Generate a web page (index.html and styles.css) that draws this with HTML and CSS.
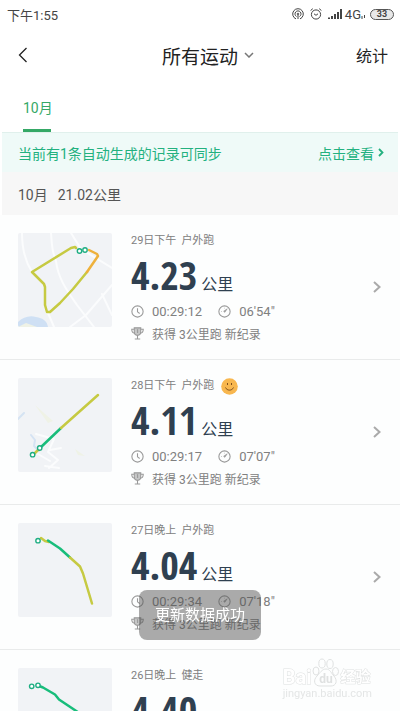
FILE: index.html
```
<!DOCTYPE html>
<html lang="zh-CN">
<head>
    <meta charset="UTF-8">
    <meta name="viewport" content="width=device-width, initial-scale=1.0">
    <title>所有运动</title>
    <link rel="stylesheet" href="styles.css">
</head>
<body>
    <!-- 公用图标 -->
    <svg class="sprite" aria-hidden="true">
        <symbol id="icon-clock" viewBox="0 0 12 12">
            <circle cx="6" cy="6" r="5.2"/>
            <path d="M6 3v3.3l2 1.5"/>
        </symbol>
        <symbol id="icon-pace" viewBox="0 0 12 12">
            <circle cx="6" cy="6" r="5.2"/>
            <path d="M8.5 3.5L6.3 6.8 5.2 5.800z" fill="currentColor" stroke-width=".6"/>
            <path d="M3 6h.6M6 2.600v.5" stroke-width=".7"/>
        </symbol>
        <symbol id="icon-trophy" viewBox="0 0 12 12">
            <path d="M3 .8h6v3.400C9 6.500 7.700 7.700 6 7.700S3 6.500 3 4.200z" fill="currentColor" fill-opacity=".55"/>
            <path d="M3 2H.7c0 2.200.9 3.500 2.700 3.700M9 2h2.300c0 2.200-.9 3.500-2.700 3.700M6 7.700v3M3.500 11h5M5.500 3l.6-.4V5.500"/>
        </symbol>
        <symbol id="icon-right" viewBox="0 0 10 14">
            <path d="M2 2l5.500 5L2 12"/>
        </symbol>
    </svg>

    <div class="app">
        <div class="status-bar">
            <span>下午1:55</span>
            <div class="status-icons">
                <svg width="12" height="12" viewBox="0 0 12 12">
                    <path d="M4 10.900A5.300 5.300 0 1 1 8 10.900M4.500 8.500A3 3 0 1 1 7.500 8.500"/>
                    <circle cx="6" cy="6" r=".8"/>
                    <path d="M6 7v4"/>
                </svg>
                <svg class="alarm" width="12" height="12" viewBox="0 0 12 12">
                    <circle cx="6" cy="6.500" r="4.600"/>
                    <path d="M.6 2.500L2.800.700M11.400 2.500L9.200.700M4 5.800l2 1.500 2-1.500"/>
                </svg>
                <svg class="signal" width="14" height="10" viewBox="0 0 14 10">
                    <path d="M1 10V8.500M4 10V7M7 10V5M10 10V3M13 10V0"/>
                </svg>
                <span class="network">4G</span>
                <svg class="data" width="5" height="4" viewBox="0 0 5 4"><path d="M1 1v3M3.500 0v3"/></svg>
                <span class="battery">33</span>
            </div>
        </div>

        <header class="nav-bar">
            <button type="button" class="back" aria-label="返回">
                <svg width="10" height="16" viewBox="0 0 10 16"><path d="M8.500 1L1.500 8l7 7"/></svg>
            </button>
            <button type="button" class="nav-title">所有运动
                <svg width="10" height="6" viewBox="0 0 10 6"><path d="M1 1l4 4 4-4"/></svg>
            </button>
            <a href="#stats" class="stats-link">统计</a>
        </header>

        <nav class="tabs">
            <a href="#month-10" class="tab active">10月</a>
        </nav>

        <div class="sync-banner">
            <span>当前有1条自动生成的记录可同步</span>
            <a href="#sync">点击查看<svg width="6" height="9" viewBox="0 0 6 9"><path d="M1 1l3.500 3.500L1 8"/></svg></a>
        </div>

        <h2 class="month" id="month-10"><span>10月</span><span>21.02公里</span></h2>

        <main class="records">
            <!-- 29日 -->
            <a href="#run-29" class="record">
                <svg class="map" viewBox="0 0 94 94">
                    <path class="water" d="M0 94v-5c5-5 12-7 18-5 7 1 11 4 12 10z"/>
                    <path class="land" d="M0 94l8-4 11 4z"/>
                    <path class="road" d="M4 0c0 15 3 28 10 39M33 0c1 16 2 20 5 28 2 18 12 31 21 44l17 22M53 0l10 16 31 19M94 52L68 82 52 94M84 61l10 21M30 80l6 14"/>
                    <path class="route" d="M58 15l-1-1-4 1-39 24 12 12 1 3v18l2 7h3l10-9 13-14 14-17"/>
                    <path class="route fast" d="M69 39l11-16-1-2-8-4"/>
                    <circle class="dot" cx="61.500" cy="18" r="2.200"/>
                    <circle class="dot" cx="67" cy="17" r="2.200"/>
                </svg>
                <div class="info">
                    <div class="title"><span>29日下午</span><span>户外跑</span></div>
                    <div class="distance"><strong>4.23</strong><span>公里</span></div>
                    <div class="stats">
                        <svg class="icon"><use href="#icon-clock"/></svg><span class="time">00:29:12</span>
                        <svg class="icon"><use href="#icon-pace"/></svg><span>06'54"</span>
                    </div>
                    <div class="award"><svg class="icon"><use href="#icon-trophy"/></svg><span>获得 3公里跑 新纪录</span></div>
                </div>
                <svg class="arrow"><use href="#icon-right"/></svg>
            </a>

            <!-- 28日 -->
            <a href="#run-28" class="record">
                <svg class="map" viewBox="0 0 94 94">
                    <path class="land" d="M17 27l18 16-5 2zM57 71l10 7-7-1z"/>
                    <path class="stream" d="M0 41l3-3 3-3M13 57l4 5-1 6 5 5"/>
                    <path class="road" d="M18 56l18 5-6 13 10 8-9 8M32 72l11-2M27 88l14 2M20 76l12 7"/>
                    <path class="route" d="M15 77l7-7"/>
                    <path class="route slow" d="M22 70l21-20"/>
                    <path class="route" d="M43 50l37-33"/>
                    <circle class="dot" cx="14.600" cy="76.700" r="2.200"/>
                    <circle class="dot" cx="21.700" cy="70" r="2.200"/>
                </svg>
                <div class="info">
                    <div class="title"><span>28日下午</span><span>户外跑</span>
                        <svg class="face" width="17" height="17" viewBox="0 0 17 17">
                            <circle cx="8.500" cy="8.500" r="8.300" fill="#f8b74f" stroke="none"/>
                            <path d="M6.500 5v2M10.500 5v2M4.500 9.500c1.500 3.500 6.500 3.500 8 0"/>
                        </svg>
                    </div>
                    <div class="distance"><strong>4.11</strong><span>公里</span></div>
                    <div class="stats">
                        <svg class="icon"><use href="#icon-clock"/></svg><span class="time">00:29:17</span>
                        <svg class="icon"><use href="#icon-pace"/></svg><span>07'07"</span>
                    </div>
                    <div class="award"><svg class="icon"><use href="#icon-trophy"/></svg><span>获得 3公里跑 新纪录</span></div>
                </div>
                <svg class="arrow"><use href="#icon-right"/></svg>
            </a>

            <!-- 27日 -->
            <a href="#run-27" class="record">
                <svg class="map" viewBox="0 0 94 94">
                    <path class="route" d="M23 15l4 3 4 1"/>
                    <path class="route slow" d="M30 17.500l12 8 10 9"/>
                    <path class="route" d="M52 34.500l10 9 3 7 9 30"/>
                    <circle class="dot" cx="20" cy="17.700" r="2.200"/>
                </svg>
                <div class="info">
                    <div class="title"><span>27日晚上</span><span>户外跑</span></div>
                    <div class="distance"><strong>4.04</strong><span>公里</span></div>
                    <div class="stats">
                        <svg class="icon"><use href="#icon-clock"/></svg><span class="time">00:29:34</span>
                        <svg class="icon"><use href="#icon-pace"/></svg><span>07'18"</span>
                    </div>
                    <div class="award"><svg class="icon"><use href="#icon-trophy"/></svg><span>获得 3公里跑 新纪录</span></div>
                </div>
                <svg class="arrow"><use href="#icon-right"/></svg>
            </a>

            <!-- 26日 -->
            <a href="#run-26" class="record">
                <svg class="map" viewBox="0 0 94 94">
                    <path class="route slow" d="M20 17.500l5 2 12 7 4 5 18 12 11 9"/>
                    <circle class="dot" cx="13.700" cy="18.300" r="2.200"/>
                    <circle class="dot" cx="20" cy="17.300" r="2.200"/>
                </svg>
                <div class="info">
                    <div class="title"><span>26日晚上</span><span>健走</span></div>
                    <div class="distance"><strong>4.40</strong></div>
                </div>
            </a>
        </main>
    </div>

    <div class="toast" role="status">更新数据成功</div>

    <div class="watermark">
        <div class="brand">
            <span class="bai">Bai</span>
            <span class="paw">
                <svg width="27" height="29" viewBox="0 0 27 29">
                    <ellipse cx="4" cy="13" rx="3" ry="4"/>
                    <ellipse cx="10" cy="5.500" rx="3.200" ry="4.500"/>
                    <ellipse cx="18" cy="6" rx="3.200" ry="4.500"/>
                    <ellipse cx="23.500" cy="13.500" rx="3" ry="4"/>
                    <path d="M14 11c4 0 5 4 8 7 4 5 2 10-3 10H8c-6 0-7-6-3-10 3-3 5-7 9-7z"/>
                </svg>
                <span>du</span>
            </span>
            <span class="cn">经验</span>
        </div>
        <div class="site">jingyan.baidu.com</div>
    </div>
</body>
</html>
```
FILE: styles.css
```
* {
    box-sizing: border-box;
}

body {
    margin: 0;
    font-family: Roboto, 'Noto Sans CJK SC', sans-serif;
    background: #fff;
    color: #333;
}

a {
    color: inherit;
    text-decoration: none;
}

button {
    padding: 0;
    border: none;
    background: none;
    font-family: inherit;
    color: inherit;
}

svg {
    flex-shrink: 0;
    fill: none;
    stroke: currentColor;
}

.sprite {
    position: absolute;
    width: 0;
    height: 0;
}

.app {
    height: 100vh;
    display: flex;
    flex-direction: column;
    overflow: hidden;
}

/* 状态栏 */
.status-bar {
    flex-shrink: 0;
    height: 28px;
    padding: 0 6px 0 7px;
    display: flex;
    align-items: center;
    justify-content: space-between;
    font-size: 13px;
    color: #444;
}

.status-icons {
    display: flex;
    align-items: center;
}

.alarm {
    margin: 0 6px;
}

.signal {
    margin-right: 3px;
    stroke-width: 2;
}

.data {
    align-self: flex-end;
    margin-bottom: 3px;
}

.battery {
    width: 24px;
    height: 11px;
    margin-left: 4px;
    border: 1px solid #555;
    border-radius: 6px;
    background: #e8e8e8;
    font-size: 9px;
    font-weight: bold;
    line-height: 9px;
    text-align: center;
}

/* 导航 */
.nav-bar {
    flex-shrink: 0;
    height: 54px;
    padding: 0 12px;
    display: grid;
    grid-template-columns: 1fr auto 1fr;
    align-items: center;
    color: #222;
}

.back {
    justify-self: start;
    display: flex;
    padding-left: 6px;
    stroke-width: 1.3;
}

.nav-title {
    display: flex;
    align-items: center;
    gap: 6px;
    margin-right: -16px;
    font-size: 19px;
}

.nav-title svg {
    color: #777;
    stroke-width: 1.5;
}

.stats-link {
    justify-self: end;
    font-size: 16px;
}

.tabs {
    flex-shrink: 0;
    height: 51px;
    margin: 0 2px;
    padding: 0 21px;
    display: flex;
    border-bottom: 1px solid #e0f0ec;
}

.tab {
    width: 28px;
    line-height: 52px;
    font-size: 14px;
    white-space: nowrap;
}

.tab.active {
    color: #35a866;
    border-bottom: 3px solid #35a866;
}

/* 同步提示 */
.sync-banner {
    flex-shrink: 0;
    height: 39px;
    margin: 0 2px;
    padding: 0 14px 0 16px;
    display: flex;
    align-items: center;
    justify-content: space-between;
    background: #effaf8;
    color: #23b17f;
    font-size: 14px;
}

.sync-banner a {
    display: flex;
    align-items: center;
    gap: 4px;
}

.sync-banner svg {
    stroke-width: 1.8;
}

.month {
    flex-shrink: 0;
    height: 43px;
    margin: 0 2px;
    padding: 0 16px;
    display: flex;
    align-items: center;
    gap: 10px;
    background: #f7f7f7;
    color: #555;
    font-size: 14px;
    font-weight: normal;
}

/* 运动记录 */
.records {
    flex: 1;
    min-height: 0;
    overflow: hidden;
}

.record {
    height: 145px;
    padding: 18px 18px 0;
    display: flex;
    border-bottom: 1px solid #e9ebeb;
    background: #fdfefe;
}

.map {
    width: 94px;
    height: 94px;
    margin-right: 19px;
    background: #f1f3f6;
    border-radius: 2px;
    stroke-linecap: round;
    stroke-linejoin: round;
}

.road {
    stroke: #fbfcfd;
    stroke-width: 2;
}

.water {
    fill: #cfe0f4;
    stroke: none;
}

.land {
    fill: #eff2e6;
    stroke: none;
}

.stream {
    stroke: #d5e3f3;
    stroke-width: 2;
}

.route {
    stroke: #c6ca42;
    stroke-width: 2.5;
}

.route.fast {
    stroke: #eeb13c;
}

.route.slow {
    stroke: #18bd7b;
}

.dot {
    fill: #fff;
    stroke: #1fae83;
    stroke-width: 1.4;
}

.info {
    flex: 1;
    min-width: 0;
    color: #808080;
}

.title {
    height: 16px;
    display: flex;
    align-items: center;
    gap: 5px;
    font-size: 11px;
    line-height: 16px;
}

.face {
    margin-left: 2px;
    stroke: #80501d;
}

.distance {
    height: 50px;
    display: flex;
    align-items: baseline;
    gap: 4px;
    line-height: 52px;
    color: #2f4050;
}

.distance strong {
    font-family: 'Open Sans Condensed', 'Roboto Condensed', Roboto, sans-serif;
    font-size: 40px;
}

.distance span {
    font-size: 16px;
}

.stats,
.award {
    display: flex;
    align-items: center;
}

.stats {
    height: 24px;
    font-size: 13px;
}

.award {
    height: 20px;
    font-size: 12px;
}

.icon {
    width: 13px;
    height: 13px;
    margin-right: 8px;
    color: #999;
}

.time {
    margin-right: 16px;
}

.arrow {
    width: 10px;
    height: 14px;
    margin-top: 47px;
    color: #aaa;
    stroke-width: 2;
}

/* 提示浮层 */
.toast {
    position: fixed;
    left: 50%;
    bottom: 71px;
    transform: translateX(-50%);
    padding: 0 16px;
    border-radius: 8px;
    background: rgba(80, 80, 80, 0.48);
    color: #fff;
    font-size: 15px;
    line-height: 50px;
    white-space: nowrap;
}

/* 水印 */
.watermark {
    position: fixed;
    right: 28px;
    bottom: 10px;
    color: #fff;
    -webkit-text-stroke: 1px #dfe1e1;
}

.brand {
    display: flex;
    align-items: flex-end;
    gap: 1px;
    line-height: 20px;
}

.bai {
    font-size: 20px;
    font-weight: bold;
    paint-order: stroke fill;
}

.paw {
    display: grid;
    justify-items: center;
    align-items: end;
}

.paw > * {
    grid-area: 1 / 1;
}

.paw svg {
    stroke: #dfe1e1;
}

.paw span {
    color: #dfe1e1;
    font-size: 12px;
    font-weight: bold;
    line-height: 16px;
    -webkit-text-stroke: 0;
}

.cn {
    font-size: 15px;
    font-weight: bold;
    paint-order: stroke fill;
}

.site {
    color: #e4e6e6;
    font-size: 11px;
    line-height: 14px;
    -webkit-text-stroke: 0;
}
```
